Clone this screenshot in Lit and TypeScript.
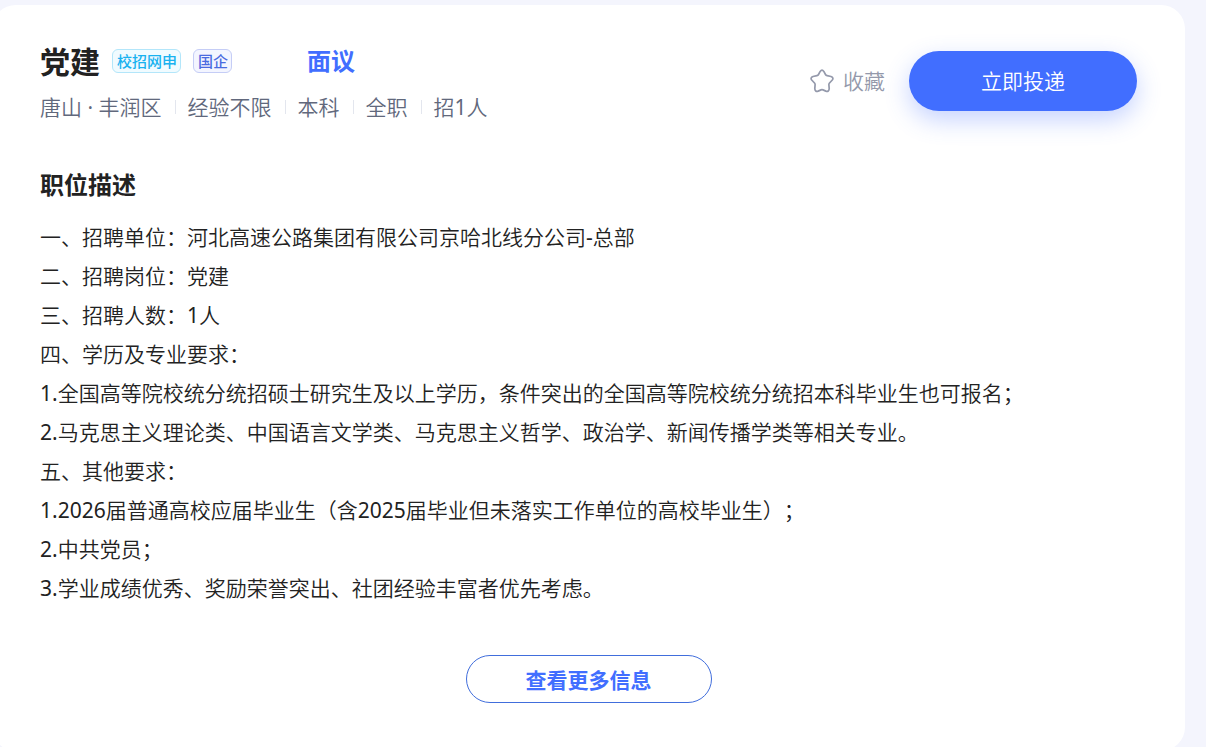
import { LitElement, html, css } from "lit";
import { customElement, state } from "lit/decorators.js";

const META = ["唐山 · 丰润区", "经验不限", "本科", "全职", "招1人"];

const DESCRIPTION = [
  "一、招聘单位：河北高速公路集团有限公司京哈北线分公司-总部",
  "二、招聘岗位：党建",
  "三、招聘人数：1人",
  "四、学历及专业要求：",
  "1.全国高等院校统分统招硕士研究生及以上学历，条件突出的全国高等院校统分统招本科毕业生也可报名；",
  "2.马克思主义理论类、中国语言文学类、马克思主义哲学、政治学、新闻传播学类等相关专业。",
  "五、其他要求：",
  "1.2026届普通高校应届毕业生（含2025届毕业但未落实工作单位的高校毕业生）；",
  "2.中共党员；",
  "3.学业成绩优秀、奖励荣誉突出、社团经验丰富者优先考虑。",
];

@customElement("app-root")
export class AppRoot extends LitElement {
  @state() private saved = false;

  static styles = css`
    :host {
      display: block;
      box-sizing: border-box;
      min-height: 100vh;
      padding: 5px 21px 0 0;
      background: #f4f5fd;
      overflow: hidden;
      color: #222;
      font: 400 21px/30px "Noto Sans", "Noto Sans CJK SC DemiLight", "Noto Sans CJK SC", sans-serif;
      text-spacing-trim: space-all;
    }
    h1,
    h2,
    .tag,
    .salary,
    button.more {
      font-family: "Noto Sans", "Noto Sans CJK SC", sans-serif;
    }
    .card {
      margin-left: -8px;
      padding: 40px 48px 48px;
      border-radius: 24px;
      background: #fff;
    }
    .head {
      display: flex;
      justify-content: space-between;
      align-items: flex-start;
      gap: 24px;
    }
    .title-row {
      display: flex;
      align-items: center;
      height: 32px;
    }
    h1 {
      margin: 0 12px 0 0;
      padding-top: 2px;
      font-size: 30px;
      line-height: 34px;
      font-weight: 700;
    }
    .tag {
      box-sizing: border-box;
      height: 24px;
      margin-right: 12px;
      padding: 0 3px 0 4px;
      border: 1px solid #b3e6fa;
      border-radius: 6px;
      background: #f0fbff;
      color: #19b2f0;
      font-size: 15px;
      line-height: 22px;
      font-weight: 500;
    }
    .tag.state {
      border-color: #c5cdf6;
      background: #f3f5ff;
      color: #4a6be0;
    }
    .salary {
      margin-left: 63px;
      color: #416eff;
      font-size: 24px;
      font-weight: 700;
    }
    .meta {
      display: flex;
      align-items: center;
      margin: 15px 0 0;
      padding: 0;
      list-style: none;
      color: #61687c;
    }
    .meta li {
      display: flex;
      align-items: center;
    }
    .meta li + li::before {
      content: "";
      width: 1px;
      height: 14px;
      margin: 0 12px 0 13px;
      background: #e3e6ee;
    }
    .actions {
      display: flex;
      align-items: center;
      gap: 24px;
      margin-top: 6px;
    }
    button {
      font: inherit;
      cursor: pointer;
    }
    .save {
      display: flex;
      align-items: center;
      gap: 9px;
      padding: 0;
      border: 0;
      background: none;
      color: #9499ab;
    }
    .save svg {
      width: 24px;
      height: 24px;
      fill: none;
      stroke: currentColor;
      stroke-width: 1.7;
      stroke-linejoin: round;
    }
    .save[aria-pressed="true"] svg {
      fill: currentColor;
    }
    .apply {
      width: 228px;
      height: 60px;
      border: 0;
      border-radius: 30px;
      background: #416eff;
      box-shadow: 0 9px 24px rgba(65, 110, 255, 0.3);
      color: #fff;
    }
    h2 {
      margin: 48px 0 18px;
      font-size: 24px;
      line-height: 30px;
      font-weight: 700;
    }
    .description p {
      margin: 0;
      line-height: 39px;
    }
    .more {
      display: block;
      width: 246px;
      height: 48px;
      margin: 47px auto 0;
      padding: 2px 0 0;
      border: 1px solid #416edc;
      border-radius: 24px;
      background: #fff;
      color: #416eff;
      font-weight: 700;
    }
  `;

  render() {
    return html`
      <main class="card">
        <header class="head">
          <div>
            <div class="title-row">
              <h1>党建</h1>
              <span class="tag">校招网申</span>
              <span class="tag state">国企</span>
              <span class="salary">面议</span>
            </div>
            <ul class="meta">
              ${META.map((item) => html`<li>${item}</li>`)}
            </ul>
          </div>
          <div class="actions">
            <button
              class="save"
              aria-pressed=${this.saved ? "true" : "false"}
              @click=${() => (this.saved = !this.saved)}
            >
              <svg viewBox="0 0 24 24" aria-hidden="true">
                <path
                  d="M10.2 2.4Q12 -.2 13.8 2.4L15.5 5.5Q16 6.5 17.1 6.7L21 7.5Q24 8.6 22.3 11L19.5 14Q18.8 14.8 18.9 15.8L19.2 19.6Q18.9 23.2 15.9 22.1L13 20.9Q12 20.5 11 20.9L8.1 22.1Q5.1 23.2 4.8 19.6L5.1 15.8Q5.2 14.8 4.5 14L1.7 11Q0 8.6 3 7.5L6.9 6.7Q8 6.5 8.5 5.5Z"
                />
              </svg>
              <span>收藏</span>
            </button>
            <button class="apply">立即投递</button>
          </div>
        </header>
        <section class="description">
          <h2>职位描述</h2>
          ${DESCRIPTION.map((line) => html`<p>${line}</p>`)}
        </section>
        <button class="more">查看更多信息</button>
      </main>
    `;
  }
}
